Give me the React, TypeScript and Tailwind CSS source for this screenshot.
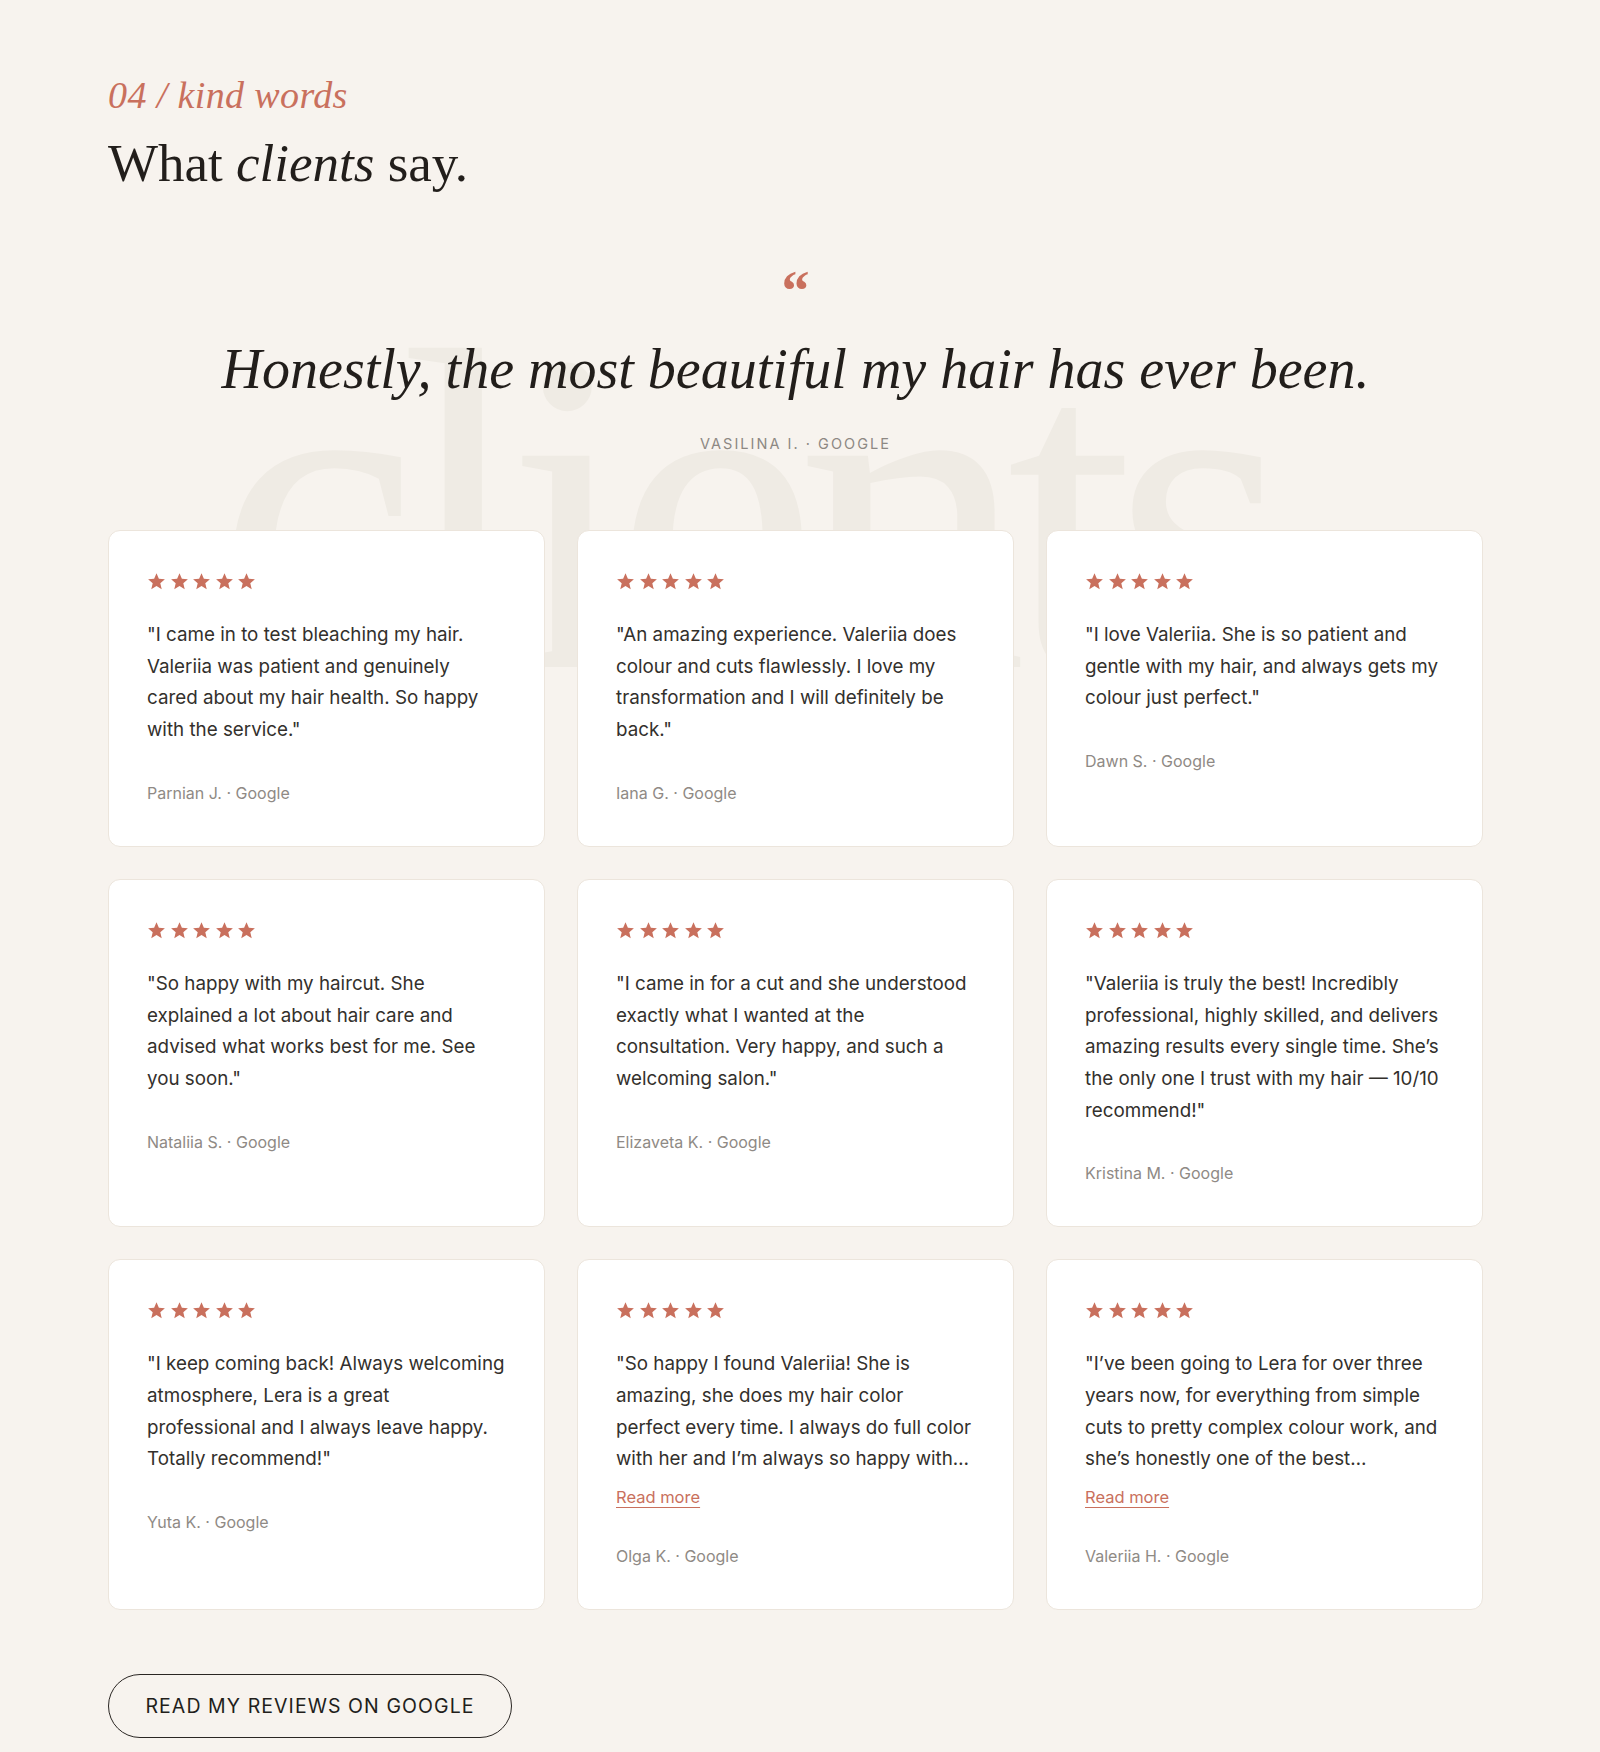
import React from "react";

interface Review {
  id: number;
  lines: string[];
  author: string;
  truncated?: boolean;
}

const reviews: Review[] = [
  {
    id: 1,
    lines: [
      "\"I came in to test bleaching my hair.",
      "Valeriia was patient and genuinely",
      "cared about my hair health. So happy",
      "with the service.\"",
    ],
    author: "Parnian J.",
  },
  {
    id: 2,
    lines: [
      "\"An amazing experience. Valeriia does",
      "colour and cuts flawlessly. I love my",
      "transformation and I will definitely be",
      "back.\"",
    ],
    author: "Iana G.",
  },
  {
    id: 3,
    lines: [
      "\"I love Valeriia. She is so patient and",
      "gentle with my hair, and always gets my",
      "colour just perfect.\"",
    ],
    author: "Dawn S.",
  },
  {
    id: 4,
    lines: [
      "\"So happy with my haircut. She",
      "explained a lot about hair care and",
      "advised what works best for me. See",
      "you soon.\"",
    ],
    author: "Nataliia S.",
  },
  {
    id: 5,
    lines: [
      "\"I came in for a cut and she understood",
      "exactly what I wanted at the",
      "consultation. Very happy, and such a",
      "welcoming salon.\"",
    ],
    author: "Elizaveta K.",
  },
  {
    id: 6,
    lines: [
      "\"Valeriia is truly the best! Incredibly",
      "professional, highly skilled, and delivers",
      "amazing results every single time. She\u2019s",
      "the only one I trust with my hair \u2014 10/10",
      "recommend!\"",
    ],
    author: "Kristina M.",
  },
  {
    id: 7,
    lines: [
      "\"I keep coming back! Always welcoming",
      "atmosphere, Lera is a great",
      "professional and I always leave happy.",
      "Totally recommend!\"",
    ],
    author: "Yuta K.",
  },
  {
    id: 8,
    lines: [
      "\"So happy I found Valeriia! She is",
      "amazing, she does my hair color",
      "perfect every time. I always do full color",
      "with her and I\u2019m always so happy with\u2026",
    ],
    author: "Olga K.",
    truncated: true,
  },
  {
    id: 9,
    lines: [
      "\"I\u2019ve been going to Lera for over three",
      "years now, for everything from simple",
      "cuts to pretty complex colour work, and",
      "she\u2019s honestly one of the best\u2026",
    ],
    author: "Valeriia H.",
    truncated: true,
  },
];

const serif = "font-['Liberation_Serif',serif]";
const sans = "font-['Inter',sans-serif]";

function Stars() {
  return (
    <div className="flex gap-[3.5px]">
      {[0, 1, 2, 3, 4].map((i) => (
        <svg key={i} width="19" height="19" viewBox="0 0 24 24" fill="#c9705d">
          <path d="M12 1.5l3 7.1 7.6.6-5.8 5 1.8 7.5L12 17.7l-6.6 4 1.8-7.5-5.8-5 7.6-.6z" />
        </svg>
      ))}
    </div>
  );
}

function ReviewCard({ review }: { review: Review }) {
  return (
    <div className="relative z-10 bg-white border border-[#ece5dc] rounded-[12px] px-[38px] pt-[41px] pb-[41px]">
      <Stars />
      <p className={`${sans} mt-[28px] text-[18.8px] leading-[31.7px] text-[#33302c]`}>
        {review.lines.map((line, i) => (
          <span key={i} className="block whitespace-nowrap">
            {line}
          </span>
        ))}
      </p>
      {review.truncated && (
        <a
          href="#"
          className={`${sans} block mt-[10px] text-[16.5px] leading-[24px] text-[#c9705d] underline underline-offset-[4px] decoration-1`}
        >
          Read more
        </a>
      )}
      <div className={`${sans} mt-[35px] text-[16px] leading-[24px] text-[#8f8a85]`}>
        {review.author} · Google
      </div>
    </div>
  );
}

export default function App() {
  return (
    <div className="relative min-h-[1752px] bg-[#f7f3ee] overflow-hidden">
      <div
        className={`${serif} absolute left-[216px] top-[282px] text-[460px] leading-none tracking-[-0.045em] text-[#efebe4] pointer-events-none select-none z-0`}
      >
        clients
      </div>

      <div className="relative pl-[108px] pr-[117px] pt-[73px] pb-[15px]">
        <div className={`${serif} italic text-[38px] leading-[44px] tracking-[0.01em] text-[#c9705d]`}>
          04 / kind words
        </div>
        <h2 className={`${serif} mt-[17px] text-[53px] leading-[58px] text-[#221e1b]`}>
          What <span className="italic">clients</span> say.
        </h2>

        <div className="relative z-10 mt-[71px] flex flex-col items-center text-center">
          <div className={`${serif} font-bold text-[56px] leading-[56px] h-[56px] text-[#c9705d]`}>
            &ldquo;
          </div>
          <blockquote
            className={`${serif} italic mt-[17px] text-[56px] leading-[67px] text-[#221e1b]`}
          >
            Honestly, the most beautiful my hair has ever been.
          </blockquote>
          <div className={`${sans} mt-[30px] text-[14.5px] leading-[22px] tracking-[0.14em] text-[#8d8883]`}>
            VASILINA I. · GOOGLE
          </div>
        </div>

        <div className="mt-[75px] grid grid-cols-3 gap-x-[32px] gap-y-[32px]">
          {reviews.map((review) => (
            <ReviewCard key={review.id} review={review} />
          ))}
        </div>

        <button
          className={`${sans} relative z-10 mt-[64px] h-[64px] w-[404px] rounded-full border-[1.5px] border-[#2a2623] text-[19.5px] tracking-[0.055em] text-[#221e1b]`}
        >
          READ MY REVIEWS ON GOOGLE
        </button>
      </div>
    </div>
  );
}
